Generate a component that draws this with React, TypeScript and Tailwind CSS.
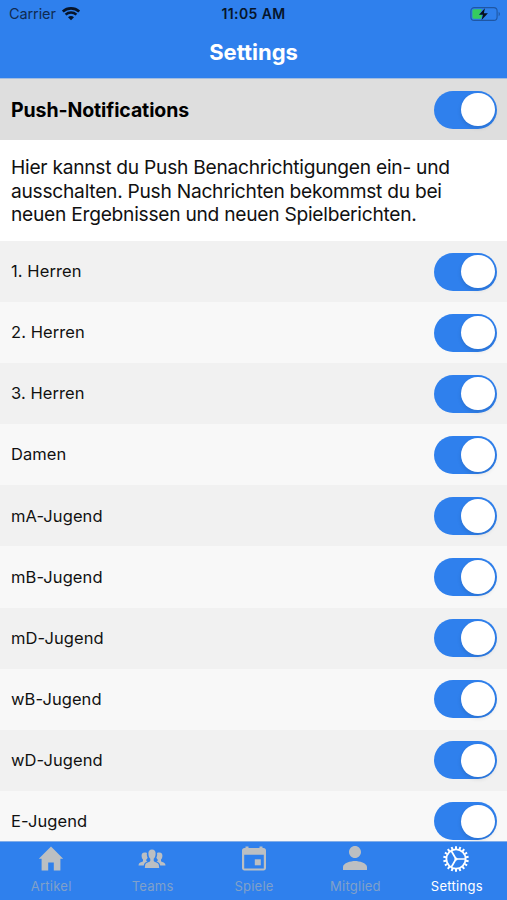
import type { ReactNode } from 'react';
import { MdPerson } from 'react-icons/md';

const teams = [
  '1. Herren',
  '2. Herren',
  '3. Herren',
  'Damen',
  'mA-Jugend',
  'mB-Jugend',
  'mD-Jugend',
  'wB-Jugend',
  'wD-Jugend',
  'E-Jugend',
];

const gearTeeth = Array.from({ length: 18 }, (_, i) => i * 20);

function Toggle() {
  return (
    <button
      type="button"
      role="switch"
      aria-checked="true"
      className="flex h-[38px] w-[63px] shrink-0 items-center justify-end rounded-full bg-[#2f80ed] pr-[2.5px]"
    >
      <span className="size-[33.5px] rounded-full bg-white shadow-[0_2px_4px_rgba(0,0,0,0.12)]" />
    </button>
  );
}

function WifiIcon() {
  return (
    <svg className="h-[14px] w-[18px]" viewBox="0 0 18 14" fill="none" stroke="#071429">
      <path d="M0.8 4.6C5.3 0.3 12.7 0.3 17.2 4.6" strokeWidth="2.7" />
      <path d="M3.6 7.7C6.6 4.9 11.4 4.9 14.4 7.7" strokeWidth="2.5" />
      <path d="M9 13.3L6 10.3C7.7 8.7 10.3 8.7 12 10.3Z" fill="#071429" stroke="none" />
    </svg>
  );
}

function BatteryIcon() {
  return (
    <svg className="h-[14px] w-[31px]" viewBox="0 0 31 14">
      <rect x="0.9" y="0.6" width="26.2" height="12.8" rx="3.4" fill="none" stroke="#1f56a3" strokeWidth="1.1" />
      <path d="M28.7 4.8c1.6.7 1.6 3.7 0 4.4z" fill="#1f56a3" />
      <path d="M4.2 2.2H12L9 8h3l-1 3.8H4.2C3 11.8 2.4 11.2 2.4 10V4C2.4 2.8 3 2.2 4.2 2.2Z" fill="#35cb5e" />
      <path d="M14.9 1.2L9 7.8H12.9L11.6 13L17.9 6.2H13.9Z" fill="#06101f" />
    </svg>
  );
}

function HouseIcon() {
  return (
    <svg className="size-[26px]" viewBox="0 0 26 26" fill="currentColor">
      <path d="M13 0.6L0.8 12.8H3.6V24.4H10.2V16.4H15.800V24.4H22.4V12.8H25.2Z" />
    </svg>
  );
}

function TorsosIcon() {
  return (
    <svg className="h-[20px] w-[28px]" viewBox="0 0 28 20" fill="currentColor">
      <path d="M14 0.6C11.5 0.6 10.2 2.3 10.4 5C10.5 7.3 11.3 8.9 12.3 9.8V11.8C12 13.3 7.8 13.5 7.2 15.7L6.8 18.9H21.2L20.8 15.7C20.2 13.5 16 13.3 15.7 11.8V9.8C16.7 8.9 17.5 7.3 17.6 5C17.8 2.3 16.5 0.6 14 0.6Z" />
      <path d="M6.6 3.4C4.4 3.4 3.4 5 3.6 7.1C3.7 8.9 4.3 10 5 10.6V12C4.7 13.2 1.3 13.2.8 15L.5 16.6H5.8C6.1 14.4 7 13.4 9.5 12.5C8.3 12.1 8.2 11.5 8.2 10.7C9 10.1 9.3 9.4 9.6 8.5C8.9 7.1 8.6 5.3 9 3.9C8.3 3.5 7.5 3.4 6.6 3.4Z" />
      <path d="M21.4 3.4C23.6 3.4 24.6 5 24.4 7.1C24.3 8.9 23.7 10 23 10.6V12C23.3 13.2 26.7 13.2 27.2 15L27.5 16.6H22.2C21.9 14.4 21 13.4 18.5 12.5C19.7 12.1 19.8 11.5 19.8 10.7C19 10.1 18.7 9.4 18.4 8.5C19.1 7.1 19.4 5.3 19 3.9C19.7 3.5 20.5 3.4 21.4 3.4Z" />
    </svg>
  );
}

function CalendarIcon() {
  return (
    <svg className="size-[26px]" viewBox="0 0 26 26" fill="currentColor">
      <path
        fillRule="evenodd"
        d="M4.500 0.500H7.5V2H18.5V0.500H21.500V2H22.5C24 2 25 3 25 4.500V22C25 23.500 24 24.500 22.500 24.500H3.500C2 24.500 1 23.500 1 22V4.500C1 3 2 2 3.500 2H4.500ZM3.200 8.700V22.500H22.800V8.700Z"
      />
      <rect x="13.8" y="13.3" width="6" height="6" />
    </svg>
  );
}

function GearIcon() {
  return (
    <svg className="size-[28px]" viewBox="-14 -14 28 28" fill="none" stroke="currentColor">
      <circle r="9.6" strokeWidth="1.8" />
      {gearTeeth.map((angle) => (
        <path key={angle} d="M0 -10V-12.800" strokeWidth="2" transform={`rotate(${angle})`} />
      ))}
      <circle r="1.6" fill="currentColor" stroke="none" />
      <path d="M0 0H9.5M0 0L-4.75 -8.23M0 0L-4.75 8.23" strokeWidth="1.7" />
    </svg>
  );
}

function Tab({ label, active = false, children }: { label: string; active?: boolean; children: ReactNode }) {
  return (
    <div className={active ? 'flex flex-1 flex-col items-center text-white' : 'flex flex-1 flex-col items-center text-[#bcbfc2]'}>
      <div className="flex h-[34px] items-center justify-center">{children}</div>
      <span
        className={
          active
            ? 'mt-px pl-px text-[13px] leading-[18px] tracking-[0.3px]'
            : 'mt-px pl-px text-[13px] leading-[18px] tracking-[0.25px] text-[#80a0c9]'
        }
      >
        {label}
      </span>
    </div>
  );
}

export default function App() {
  return (
    <div className="flex h-[900px] w-[507px] flex-col overflow-hidden bg-white font-['Inter',sans-serif] text-[#111]">
      <header className="h-[79px] shrink-0 border-b border-[#a3bde0] bg-[#2f80ed]">
        <div className="grid h-[27px] grid-cols-3 items-center px-[6px]">
          <div className="flex items-center gap-[6px] pl-[3px] text-[#0f2b52]">
            <span className="text-[14.5px] leading-[18px] tracking-[-0.1px]">Carrier</span>
            <WifiIcon />
          </div>
          <span className="text-center text-[14px] font-semibold tracking-[0.4px] text-[#06152b]">11:05 AM</span>
          <div className="flex justify-end">
            <BatteryIcon />
          </div>
        </div>
        <h1 className="mt-[10px] text-center text-[22px] font-bold leading-[30px] text-white">Settings</h1>
      </header>

      <main className="min-h-0 flex-1 overflow-hidden">
        <section className="flex h-[61px] items-center justify-between bg-[#dedede] pl-[11px] pr-[10px]">
          <h2 className="pt-[2px] text-[19.5px] font-bold tracking-[-0.1px] text-black">Push-Notifications</h2>
          <Toggle />
        </section>
        <p className="h-[101px] whitespace-nowrap pl-[11px] pt-[16px] text-[19.2px] leading-[23.5px] tracking-[-0.26px]">
          Hier kannst du Push Benachrichtigungen ein- und
          <br />
          ausschalten. Push Nachrichten bekommst du bei
          <br />
          neuen Ergebnissen und neuen Spielberichten.
        </p>
        <ul>
          {teams.map((team) => (
            <li
              key={team}
              className="flex h-[61.1px] items-center justify-between bg-[#f8f8f8] pl-[11px] pr-[10px] odd:bg-[#f1f1f1]"
            >
              <span className="text-[16.5px] tracking-[0.08px]">{team}</span>
              <Toggle />
            </li>
          ))}
        </ul>
      </main>

      <nav className="flex h-[59px] shrink-0 border-t border-[#82ade8] bg-[#2f80ed]">
        <Tab label="Artikel">
          <HouseIcon />
        </Tab>
        <Tab label="Teams">
          <TorsosIcon />
        </Tab>
        <Tab label="Spiele">
          <CalendarIcon />
        </Tab>
        <Tab label="Mitglied">
          <MdPerson className="-mt-[2px] size-[36px]" />
        </Tab>
        <Tab label="Settings" active>
          <GearIcon />
        </Tab>
      </nav>
    </div>
  );
}
